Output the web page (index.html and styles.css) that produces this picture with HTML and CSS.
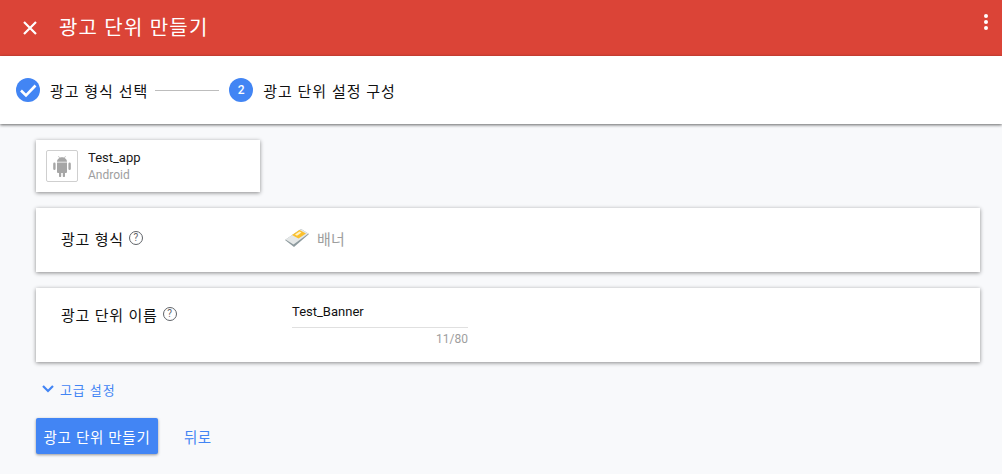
FILE: index.html
```html
<!DOCTYPE html>
<html lang="ko">
<head>
<meta charset="utf-8">
<title>광고 단위 만들기</title>
<link rel="stylesheet" href="styles.css">
</head>
<body>
<header class="topbar">
  <svg class="close" width="16" height="16" viewBox="0 0 16 16"><path d="M2 2L14 14M14 2L2 14" stroke="#fff" stroke-width="2.2" fill="none"/></svg>
  <h1 class="title">광고 단위 만들기</h1>
  <div class="more"><i></i><i></i><i></i></div>
</header>
<nav class="stepper">
  <svg class="step-icon" width="24" height="24" viewBox="0 0 24 24"><circle cx="12" cy="12" r="12" fill="#4285f4"/><path d="M5 12.5L10 17.5L19.5 7.5" stroke="#fff" stroke-width="2.6" fill="none"/></svg>
  <span class="step-label">광고 형식 선택</span>
  <span class="step-line"></span>
  <span class="step-num">2</span>
  <span class="step-label">광고 단위 설정 구성</span>
</nav>
<main class="content">
  <section class="app-card">
    <div class="app-icon">
      <svg width="18" height="22" viewBox="0 0 18 22"><path fill="#a6a6a6" d="M4 7.5h10v9.5a1 1 0 0 1-1 1h-1v3a1.1 1.1 0 0 1-2.2 0v-3H8.2v3a1.1 1.1 0 0 1-2.2 0v-3H5a1 1 0 0 1-1-1zM1.4 7.5A1.2 1.2 0 0 1 2.6 8.700v5a1.200 1.200 0 0 1-2.400 0v-5A1.200 1.200 0 0 1 1.400 7.500zM16.600 7.500a1.200 1.200 0 0 1 1.200 1.200v5a1.200 1.200 0 0 1-2.400 0v-5a1.200 1.200 0 0 1 1.200-1.200zM4 6.800C4 5 5 3.700 6.300 3L5.300 1.400l.4-.3L6.800 2.700C8.100 2.200 9.900 2.200 11.200 2.700L12.300 1.100l.4.3L11.700 3C13 3.700 14 5 14 6.800z"/></svg>
    </div>
    <div class="app-text">
      <div class="app-name">Test_app</div>
      <div class="app-platform">Android</div>
    </div>
  </section>
  <section class="card card-format">
    <div class="field-label">광고 형식 <span class="help">?</span></div>
    <div class="format-value">
      <svg class="banner-icon" width="26" height="20" viewBox="0 0 26 20"><path fill="#8d9a9e" d="M1 12L17 1L25 6L10 19Z"/><path fill="#e4e7e7" d="M1.500 11.500L17 1L24.500 5.500L9.500 16.500Z"/><path fill="#fbc02d" d="M8 7L15.500 2L22 5.500L14.500 10.500Z"/><path fill="#fff3c4" d="M11 6.500L15.500 3.500L17.500 4.500L13 7.800Z"/></svg>
      <span>배너</span>
    </div>
  </section>
  <section class="card card-name">
    <div class="field-label">광고 단위 이름 <span class="help">?</span></div>
    <div class="name-field">
      <div class="name-input">Test_Banner</div>
      <div class="name-count">11/80</div>
    </div>
  </section>
  <a class="advanced">
    <svg width="14" height="10" viewBox="0 0 14 10"><path d="M2 2L7 7L12 2" stroke="#4285f4" stroke-width="2.200" fill="none"/></svg>
    <span>고급 설정</span>
  </a>
  <div class="actions">
    <button class="primary">광고 단위 만들기</button>
    <a class="back">뒤로</a>
  </div>
</main>
</body>
</html>
```
FILE: styles.css
```css
* { box-sizing: border-box; }
html, body { margin: 0; height: 100%; }
body {
  background: #f8f9fb;
  font-family: Roboto, "Noto Sans CJK KR", sans-serif;
  color: #1a1a1a;
  overflow: hidden;
}
.topbar {
  height: 56px;
  background: #db4437;
  display: flex;
  align-items: center;
  padding: 0 14px 0 22px;
  color: #fff;
}
.close { flex: none; }
.title {
  margin: -4px 0 0 21px;
  font-size: 20px;
  font-weight: 400;
  letter-spacing: 1.2px;
  flex: 1;
}
.more { display: flex; flex-direction: column; gap: 2px; margin-top: -12px; }
.more i { width: 4px; height: 4px; background: #fff; border-radius: 50%; display: block; }
.stepper {
  height: 68px;
  background: #fff;
  display: flex;
  align-items: center;
  padding: 0 0 0 16px;
  box-shadow: 0 1px 3px rgba(0,0,0,.6);
  position: relative;
  font-size: 15px;
  color: #111;
}
.step-label { margin-left: 10px; letter-spacing: 1px; }
.step-icon { flex: none; }
.step-line { width: 64px; height: 1px; background: #bdbdbd; margin: 0 10px 0 7px; }
.step-num {
  width: 24px; height: 24px; border-radius: 50%;
  background: #4285f4; color: #fff;
  font-size: 12px; font-weight: 500;
  display: flex; align-items: center; justify-content: center;
}
.content { padding: 16px 22px 0 36px; }
.app-card {
  width: 224px; height: 52px; background: #fff;
  box-shadow: 0 1px 4px rgba(0,0,0,.45);
  display: flex; align-items: center;
  padding-left: 10px;
}
.app-icon {
  width: 32px; height: 32px;
  border: 1px solid #cfcfcf; border-radius: 2px;
  display: flex; align-items: center; justify-content: center;
}
.app-text { margin-left: 10px; }
.app-name { font-size: 13px; line-height: 17px; color: #1a1a1a; }
.app-platform { font-size: 12px; line-height: 17px; padding-top: 1px; color: #9e9e9e; }
.card {
  background: #fff;
  box-shadow: 0 1px 4px rgba(0,0,0,.45);
  display: flex;
  padding-left: 25px;
  margin-top: 16px;
}
.card-format { height: 64px; align-items: center; }
.card-name { height: 74px; }
.field-label { width: 223px; font-size: 15px; letter-spacing: 0.8px; color: #111; display: flex; align-items: center; }
.card-format .field-label { margin-top: -4px; }
.card-name .field-label { height: 20px; margin-top: 16px; }
.help {
  flex: none;
  width: 14px; height: 14px; border: 1px solid #5f6368; border-radius: 50%;
  font-size: 10px; line-height: 12px; text-align: center; color: #5f6368;
  margin-left: 5px; letter-spacing: 0;
}
.format-value { display: flex; align-items: center; font-size: 15px; letter-spacing: 0.3px; color: #9e9e9e; margin-top: -4px; }
.banner-icon { margin-right: 7px; }
.name-field { width: 176px; margin-left: 8px; padding-top: 16px; }
.name-input { font-size: 13px; line-height: 16px; padding-bottom: 7px; border-bottom: 1px solid #e0e0e0; color: #111; }
.name-count { font-size: 12px; line-height: 14px; margin-top: 4px; text-align: right; color: #9e9e9e; }
.advanced {
  display: flex; align-items: center;
  margin: 19px 0 0 5px;
  height: 16px;
  font-size: 13px; letter-spacing: 0.9px; color: #4285f4;
}
.advanced span { margin-left: 5px; }
.actions { display: flex; align-items: center; margin-top: 21px; }
.primary {
  width: 122px; height: 36px;
  border: 0; border-radius: 2px;
  background: #4285f4; color: #fff;
  font: 400 14.500px Roboto, "Noto Sans CJK KR", sans-serif;
  letter-spacing: 0.7px;
  padding: 0;
  box-shadow: 0 1px 3px rgba(0,0,0,.4);
}
.back { margin: 1px 0 0 26px; font-size: 14.500px; letter-spacing: 0.3px; color: #4285f4; }
```
